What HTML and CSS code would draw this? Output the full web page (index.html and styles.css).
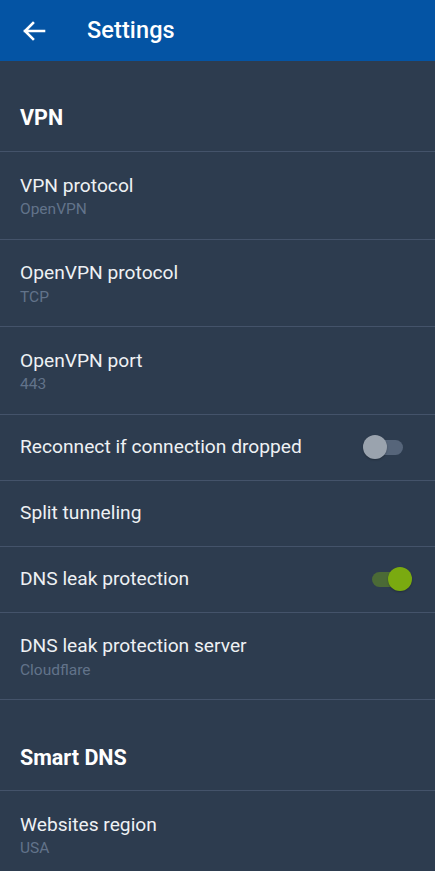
FILE: index.html
```html
<!DOCTYPE html>
<html lang="en">
<head>
<meta charset="utf-8">
<title>Settings</title>
<link rel="stylesheet" href="styles.css">
</head>
<body>
<header class="appbar">
  <button class="back" aria-label="Back">
    <svg width="24" height="24" viewBox="0 0 24 24" aria-hidden="true">
      <path d="M3 12H22M11 4L3 12L11 20" fill="none" stroke="#ffffff" stroke-width="2.6" stroke-linecap="square" stroke-linejoin="miter"/>
    </svg>
  </button>
  <h1 class="appbar-title">Settings</h1>
</header>
<main class="list">
  <div class="section">VPN</div>
  <div class="row two">
    <div class="texts"><div class="title">VPN protocol</div><div class="sub">OpenVPN</div></div>
  </div>
  <div class="row two">
    <div class="texts"><div class="title">OpenVPN protocol</div><div class="sub">TCP</div></div>
  </div>
  <div class="row two">
    <div class="texts"><div class="title">OpenVPN port</div><div class="sub">443</div></div>
  </div>
  <div class="row one">
    <div class="texts"><div class="title">Reconnect if connection dropped</div></div>
    <div class="switch"><span class="track"></span><span class="thumb"></span></div>
  </div>
  <div class="row one">
    <div class="texts"><div class="title">Split tunneling</div></div>
  </div>
  <div class="row one">
    <div class="texts"><div class="title">DNS leak protection</div></div>
    <div class="switch on"><span class="track"></span><span class="thumb"></span></div>
  </div>
  <div class="row two">
    <div class="texts"><div class="title">DNS leak protection server</div><div class="sub">Cloudflare</div></div>
  </div>
  <div class="section sec-border">Smart DNS</div>
  <div class="row two">
    <div class="texts"><div class="title">Websites region</div><div class="sub">USA</div></div>
  </div>
</main>
</body>
</html>
```
FILE: styles.css
```css
* { box-sizing: border-box; }
html, body {
  margin: 0;
  padding: 0;
  background: #2d3c4f;
  font-family: Roboto, "Liberation Sans", sans-serif;
  color: #eef1f4;
}
body { overflow: hidden; height: 871px; }
.appbar {
  height: 61px;
  background: #0454a4;
  display: flex;
  align-items: center;
  padding-left: 22px;
}
.back {
  width: 24px;
  height: 24px;
  padding: 0;
  border: 0;
  background: none;
  display: flex;
  margin-top: 1px;
}
.appbar-title {
  margin: 0 0 0 41px;
  font-size: 23.5px;
  font-weight: 500;
  color: #ffffff;
  line-height: 28px;
  letter-spacing: 0.1px;
  margin-top: -2px;
}
.list { display: flex; flex-direction: column; }
.section {
  padding: 43px 20px 19px;
  font-size: 21.5px;
  font-weight: 700;
  line-height: 28px;
  color: #ffffff;
}
.sec-border { border-top: 1px solid #44536a; padding-top: 44px; padding-bottom: 18px; }
.row {
  border-top: 1px solid #44536a;
  display: flex;
  align-items: center;
  padding: 0 20px;
}
.row.two { padding-top: 21.5px; padding-bottom: 19.5px; }
.row.one { height: 65px; box-sizing: content-box; padding-top: 0; padding-bottom: 0; }
.texts { flex: 1; }
.title {
  font-size: 19.2px;
  line-height: 24px;
  color: #eef1f4;
}
.sub {
  margin-top: 1.5px;
  font-size: 15.5px;
  line-height: 20px;
  color: #62738a;
}
.switch {
  position: relative;
  width: 49px;
  height: 24px;
  margin-right: 3px;
}
.track {
  position: absolute;
  left: 9px;
  top: 4.5px;
  width: 31px;
  height: 15px;
  border-radius: 8px;
  background: #56657a;
}
.thumb {
  position: absolute;
  left: 0;
  top: 0;
  width: 24px;
  height: 24px;
  border-radius: 50%;
  background: #9aa3ae;
  box-shadow: 0 1px 2px rgba(0,0,0,0.25);
}
.switch.on .track { background: #4b6a36; }
.switch.on .thumb { left: 25px; background: #7aaa10; }
```
